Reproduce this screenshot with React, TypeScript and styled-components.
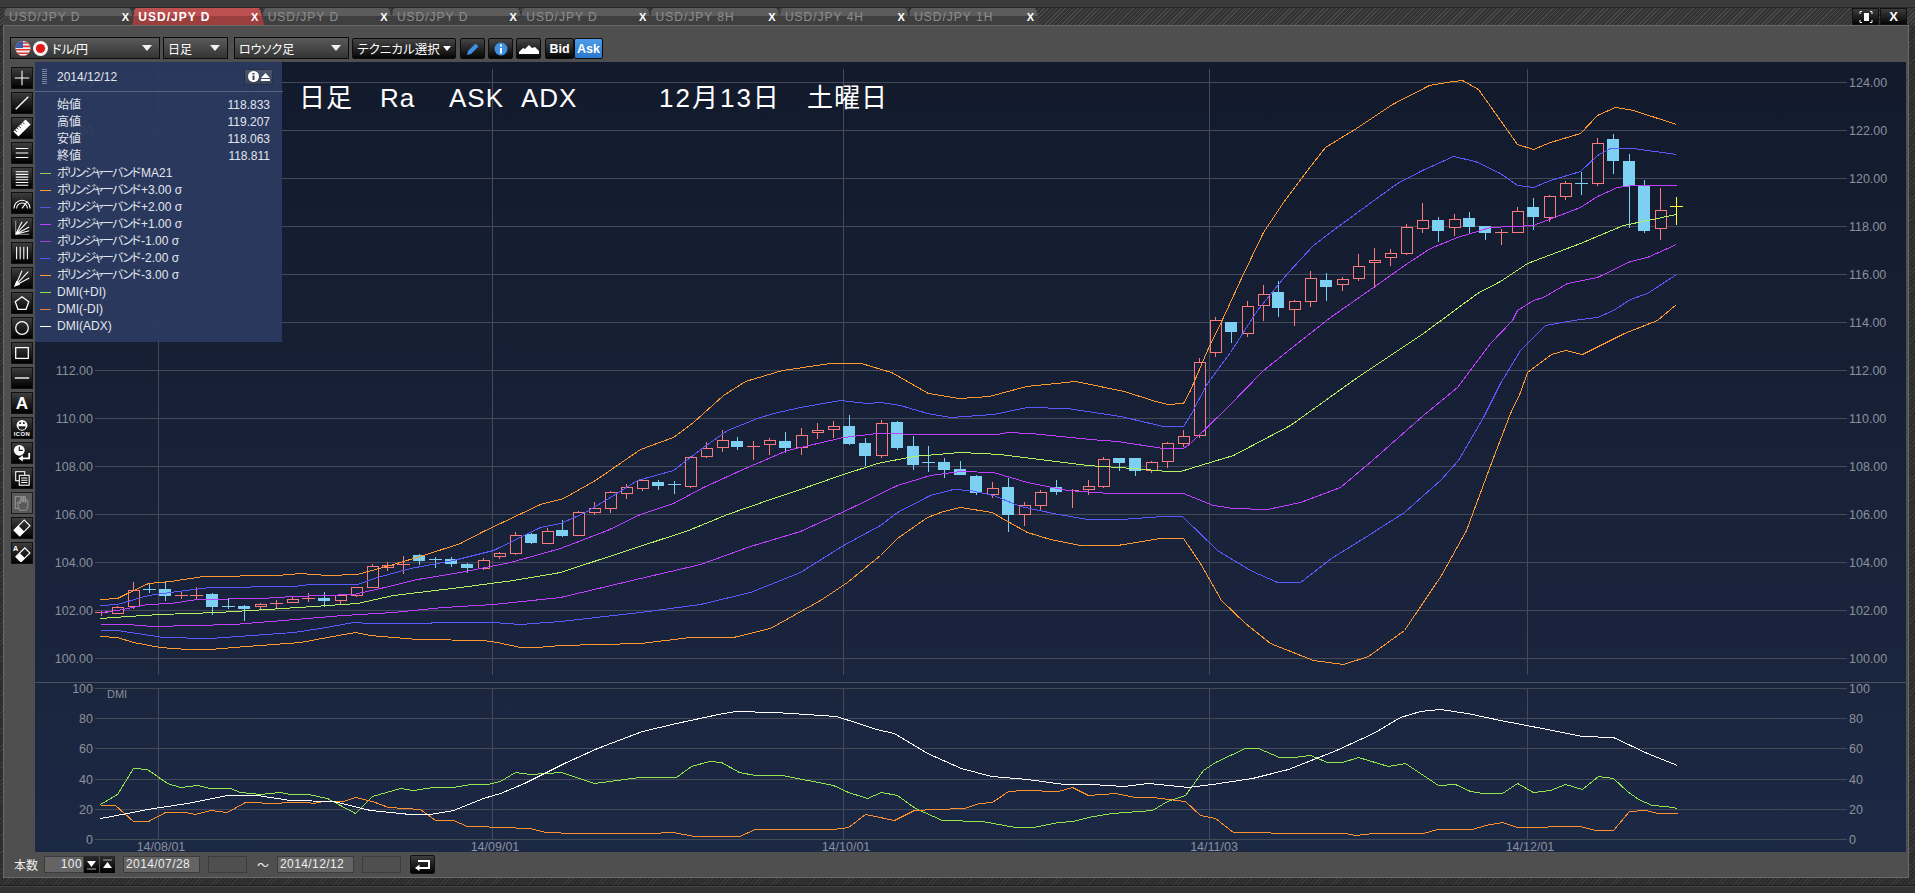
import { FC, ReactNode } from "react";
import styled, { createGlobalStyle } from "styled-components";

const FONT = `"Liberation Sans", "Noto Sans CJK JP", sans-serif`;

const GlobalStyle = createGlobalStyle`
  html, body { margin: 0; padding: 0; background: #2e2e2e; }
  body { font-family: ${FONT}; font-feature-settings: "palt"; }
`;

type CandleKind = "r" | "b" | "y";
type Row = [CandleKind, number, number, number, number];
type Pt = [number, number];

// 3x crop readings: [kind, high, body top, body bottom, low] relative to y0
const seg = (y0: number, rows: Row[]) =>
  rows.map(([k, h, t, b, l]) => ({
    k,
    hi: y0 + h / 3,
    top: y0 + t / 3,
    bot: y0 + b / 3,
    lo: y0 + l / 3,
  }));

const candles = [
  ...seg(530, [
    ["r", 243, 247, 247, 257],
    ["r", 227, 230, 247, 251],
    ["r", 157, 181, 230, 237],
    ["b", 160, 178, 178, 190],
    ["b", 155, 178, 197, 213],
    ["r", 183, 196, 196, 208],
    ["r", 172, 196, 196, 208],
    ["b", 188, 192, 230, 254],
    ["b", 205, 229, 229, 236],
    ["b", 225, 228, 237, 273],
    ["r", 220, 223, 230, 236],
    ["r", 210, 218, 218, 233],
    ["r", 199, 208, 217, 219],
    ["r", 189, 203, 203, 215],
    ["b", 186, 204, 213, 230],
    ["r", 193, 196, 212, 222],
    ["r", 170, 172, 196, 200],
    ["r", 103, 109, 173, 175],
    ["r", 97, 106, 113, 123],
    ["r", 78, 103, 103, 131],
    ["b", 72, 75, 93, 104],
    ["b", 82, 87, 87, 113],
    ["b", 82, 87, 102, 110],
    ["b", 100, 102, 114, 128],
    ["r", 85, 89, 113, 120],
    ["r", 66, 70, 80, 87],
    ["r", 7, 16, 71, 74],
    ["b", 9, 12, 39, 42],
    ["r", -6, 4, 39, 42],
  ]),
  ...seg(390, [
    ["b", 390, 420, 438, 441],
    ["r", 363, 367, 435, 438],
    ["r", 336, 355, 368, 375],
    ["r", 303, 307, 356, 369],
    ["r", 282, 292, 311, 327],
    ["r", 268, 271, 296, 302],
    ["b", 270, 276, 288, 300],
    ["b", 273, 283, 283, 312],
    ["r", 198, 202, 290, 293],
    ["r", 156, 175, 200, 204],
    ["r", 120, 151, 173, 186],
    ["b", 141, 153, 171, 180],
    ["r", 153, 167, 167, 210],
    ["r", 144, 151, 164, 195],
    ["b", 126, 153, 174, 190],
    ["r", 114, 136, 173, 195],
    ["r", 99, 121, 128, 147],
  ]),
  ...seg(400, [
    ["r", 63, 79, 89, 114],
    ["b", 45, 78, 132, 135],
    ["b", 114, 129, 168, 198],
    ["r", 60, 70, 167, 173],
    ["b", 63, 66, 144, 150],
    ["b", 108, 138, 195, 210],
    ["b", 138, 187, 187, 216],
    ["b", 174, 186, 210, 234],
    ["b", 183, 207, 225, 225],
    ["b", 225, 228, 278, 285],
    ["r", 246, 265, 284, 294],
    ["b", 234, 261, 345, 396],
    ["r", 306, 316, 344, 378],
    ["r", 270, 277, 317, 330],
    ["b", 240, 261, 276, 285],
    ["r", 267, 269, 269, 324],
    ["r", 240, 259, 269, 285],
    ["r", 171, 178, 260, 263],
    ["b", 174, 174, 189, 213],
    ["b", 174, 174, 213, 228],
    ["r", 183, 187, 212, 219],
    ["r", 126, 130, 185, 204],
    ["r", 90, 109, 131, 140],
  ]),
  ...seg(170, [
    ["r", 564, 577, 797, 803],
    ["r", 441, 451, 548, 560],
    ["b", 456, 456, 486, 519],
    ["r", 393, 409, 491, 501],
    ["r", 345, 373, 407, 453],
    ["b", 333, 366, 414, 441],
    ["r", 390, 394, 418, 468],
    ["r", 303, 325, 395, 411],
    ["b", 309, 330, 351, 393],
    ["r", 321, 328, 344, 363],
    ["r", 252, 289, 326, 333],
    ["r", 234, 271, 278, 354],
    ["r", 237, 250, 263, 288],
    ["r", 162, 172, 251, 255],
    ["r", 99, 151, 176, 189],
    ["b", 141, 150, 183, 216],
    ["r", 132, 148, 173, 198],
    ["b", 126, 144, 171, 192],
    ["b", 168, 168, 189, 210],
    ["r", 177, 187, 187, 225],
    ["r", 111, 124, 188, 190],
  ]),
  ...seg(100, [
    ["b", 294, 321, 351, 390],
    ["r", 285, 289, 353, 366],
    ["r", 243, 250, 290, 300],
    ["b", 216, 250, 250, 285],
    ["r", 114, 130, 251, 258],
    ["b", 102, 117, 183, 222],
    ["b", 162, 183, 258, 384],
    ["b", 240, 258, 393, 399],
    ["r", 264, 331, 385, 420],
    ["y", 291, 319, 319, 375],
  ]),
];

const bands: { color: string; pts: Pt[] }[] = [
  {
    color: "#ff9a33",
    pts: [
      [100, 599], [117, 598], [127, 593], [148, 583], [170, 581], [203, 576], [277, 575], [300, 573], [327, 575], [357, 574],
      [393, 564], [423, 555], [460, 543], [483, 531], [540, 504], [563, 498], [595, 480], [640, 449], [673, 437], [693, 422],
      [723, 395], [745, 381], [782, 370], [830, 363], [861, 363], [891, 372], [928, 393], [959, 398], [989, 396], [1026, 386],
      [1075, 381], [1124, 391], [1152, 400], [1167, 404], [1183, 403], [1190, 390], [1207, 350], [1223, 317], [1240, 280],
      [1263, 232], [1283, 202], [1307, 170], [1325, 147], [1356, 128], [1392, 104], [1429, 85], [1453, 81], [1462, 80],
      [1478, 89], [1500, 120], [1517, 144], [1533, 149], [1550, 142], [1580, 133], [1597, 115], [1615, 107], [1633, 110], [1676, 124],
    ],
  },
  {
    color: "#5a5aff",
    pts: [
      [100, 605], [117, 604], [148, 595], [170, 592], [210, 587], [293, 586], [310, 584], [357, 584], [377, 577], [410, 568],
      [453, 560], [493, 550], [540, 527], [560, 523], [583, 513], [610, 497], [637, 480], [673, 470], [703, 447], [727, 430],
      [757, 418], [773, 413], [800, 407], [840, 400], [867, 403], [880, 402], [900, 405], [927, 413], [950, 417], [993, 414],
      [1027, 407], [1067, 408], [1120, 416], [1163, 426], [1183, 426], [1190, 415], [1207, 383], [1230, 352], [1257, 310],
      [1287, 273], [1313, 245], [1330, 232], [1357, 212], [1397, 183], [1422, 170], [1453, 156], [1475, 161], [1500, 173],
      [1517, 185], [1533, 187], [1550, 180], [1580, 171], [1597, 155], [1610, 148], [1633, 148], [1676, 154],
    ],
  },
  {
    color: "#c040ff",
    pts: [
      [100, 612], [117, 610], [147, 604], [170, 603], [197, 599], [260, 598], [293, 596], [353, 594], [380, 588], [417, 579],
      [460, 572], [510, 562], [560, 548], [607, 530], [640, 514], [673, 503], [703, 487], [747, 467], [787, 450], [800, 447],
      [843, 437], [877, 433], [927, 434], [997, 434], [1007, 432], [1030, 433], [1090, 439], [1117, 441], [1163, 448], [1183, 448],
      [1190, 443], [1227, 407], [1263, 370], [1297, 343], [1330, 317], [1373, 287], [1407, 263], [1430, 248], [1457, 237],
      [1490, 227], [1533, 225], [1580, 207], [1597, 196], [1617, 187], [1633, 185], [1676, 185],
    ],
  },
  {
    color: "#b4f060",
    pts: [
      [100, 618], [127, 616], [160, 614], [217, 612], [267, 609], [313, 606], [357, 603], [393, 595], [460, 587], [513, 580],
      [560, 572], [688, 530], [727, 514], [773, 498], [800, 489], [837, 476], [877, 463], [913, 456], [960, 452], [1000, 454],
      [1047, 460], [1087, 465], [1133, 468], [1167, 471], [1180, 471], [1233, 455], [1290, 425], [1357, 377], [1423, 333],
      [1477, 293], [1500, 281], [1527, 263], [1580, 243], [1623, 225], [1676, 214],
    ],
  },
  {
    color: "#c040ff",
    pts: [
      [100, 624], [127, 624], [153, 626], [233, 624], [307, 618], [343, 615], [393, 612], [443, 607], [493, 604], [560, 597],
      [640, 578], [700, 564], [750, 546], [800, 531], [850, 508], [897, 485], [930, 475], [960, 471], [993, 472], [1027, 482],
      [1067, 490], [1110, 493], [1183, 493], [1213, 505], [1233, 508], [1267, 509], [1300, 502], [1340, 487], [1372, 460],
      [1423, 415], [1457, 387], [1490, 343], [1512, 320], [1517, 310], [1533, 300], [1543, 297], [1567, 283], [1597, 277],
      [1630, 261], [1647, 257], [1676, 244],
    ],
  },
  {
    color: "#5a5aff",
    pts: [
      [100, 630], [117, 630], [150, 635], [163, 637], [210, 638], [293, 632], [320, 628], [353, 622], [370, 623], [493, 622],
      [520, 624], [560, 621], [640, 612], [700, 604], [750, 592], [800, 572], [843, 545], [880, 525], [897, 512], [930, 495],
      [953, 489], [970, 490], [993, 495], [1020, 506], [1053, 513], [1087, 519], [1120, 519], [1163, 516], [1182, 516],
      [1217, 550], [1250, 570], [1277, 582], [1300, 582], [1331, 558], [1368, 535], [1404, 512], [1440, 480], [1458, 460],
      [1483, 417], [1500, 383], [1520, 350], [1545, 325], [1573, 320], [1597, 317], [1613, 310], [1630, 299], [1647, 293], [1676, 274],
    ],
  },
  {
    color: "#ff9a33",
    pts: [
      [100, 636], [117, 637], [133, 642], [160, 647], [187, 649], [210, 649], [233, 647], [300, 642], [327, 637], [355, 632],
      [370, 635], [417, 639], [483, 640], [497, 642], [520, 647], [537, 647], [560, 645], [640, 643], [690, 637], [733, 637],
      [770, 628], [820, 600], [847, 582], [880, 555], [897, 538], [927, 517], [943, 511], [960, 507], [992, 512], [1000, 517],
      [1027, 532], [1050, 539], [1080, 545], [1117, 545], [1160, 538], [1183, 538], [1200, 563], [1221, 600], [1245, 623],
      [1270, 643], [1313, 660], [1343, 664], [1368, 656], [1404, 630], [1441, 575], [1466, 530], [1492, 460], [1510, 413],
      [1520, 392], [1527, 372], [1551, 354], [1565, 350], [1582, 354], [1600, 345], [1624, 333], [1657, 320], [1676, 304],
    ],
  },
];

const dmiPlus: Pt[] = [
  [100, 804], [117, 794], [133, 768], [147, 769], [167, 783], [180, 787], [197, 785], [210, 788], [230, 788], [240, 792],
  [260, 794], [280, 792], [290, 794], [308, 794], [327, 798], [355, 813], [372, 796], [400, 788], [413, 790], [433, 787],
  [453, 787], [470, 784], [487, 784], [500, 781], [515, 772], [530, 774], [561, 772], [594, 783], [639, 777], [676, 777],
  [691, 766], [709, 761], [721, 762], [739, 772], [755, 775], [782, 775], [833, 785], [848, 792], [867, 798], [881, 792],
  [897, 795], [915, 808], [942, 820], [982, 821], [1015, 827], [1033, 827], [1058, 822], [1073, 821], [1088, 817], [1112, 813],
  [1152, 810], [1167, 801], [1185, 795], [1203, 770], [1215, 762], [1245, 748], [1258, 748], [1279, 757], [1294, 757],
  [1310, 755], [1327, 762], [1342, 762], [1358, 757], [1388, 766], [1405, 763], [1420, 773], [1438, 785], [1455, 784],
  [1470, 791], [1483, 793], [1502, 793], [1517, 783], [1533, 792], [1550, 790], [1565, 784], [1582, 789], [1598, 776],
  [1613, 778], [1627, 791], [1638, 799], [1652, 805], [1665, 806], [1677, 808],
];

const dmiMinus: Pt[] = [
  [100, 805], [115, 805], [133, 821], [148, 821], [165, 812], [185, 812], [195, 814], [210, 810], [227, 812], [245, 802],
  [277, 803], [287, 802], [307, 802], [313, 803], [323, 801], [343, 801], [355, 797], [372, 801], [388, 807], [420, 809],
  [435, 820], [453, 820], [467, 826], [487, 826], [490, 827], [500, 827], [530, 828], [545, 832], [576, 833], [600, 833],
  [648, 833], [673, 832], [694, 836], [739, 836], [755, 829], [833, 829], [848, 827], [865, 814], [894, 820], [914, 810],
  [936, 809], [964, 808], [979, 803], [992, 802], [1008, 791], [1024, 790], [1058, 791], [1072, 787], [1088, 795], [1115, 793],
  [1135, 797], [1152, 797], [1185, 801], [1200, 815], [1215, 818], [1233, 832], [1255, 832], [1285, 833], [1345, 833],
  [1355, 835], [1373, 833], [1423, 833], [1437, 829], [1472, 829], [1485, 825], [1502, 822], [1517, 827], [1580, 826],
  [1595, 830], [1613, 830], [1629, 811], [1645, 810], [1658, 813], [1677, 813],
];

const dmiAdx: Pt[] = [
  [100, 818], [127, 813], [147, 809], [187, 803], [227, 795], [257, 795], [290, 800], [333, 801], [370, 810], [410, 814],
  [430, 814], [453, 810], [483, 798], [500, 793], [524, 783], [564, 763], [597, 748], [642, 731], [676, 723], [718, 714],
  [736, 711], [773, 712], [791, 713], [836, 716], [858, 723], [876, 729], [894, 733], [927, 753], [961, 768], [991, 776],
  [1027, 779], [1064, 784], [1091, 784], [1124, 786], [1148, 783], [1188, 787], [1212, 784], [1252, 778], [1288, 769],
  [1336, 750], [1373, 733], [1400, 717], [1420, 711], [1440, 709], [1467, 713], [1500, 720], [1547, 729], [1582, 736],
  [1613, 737], [1647, 753], [1677, 765],
];

const priceLabels = [124, 122, 120, 118, 116, 114, 112, 110, 108, 106, 104, 102, 100];
const dmiLabels = [100, 80, 60, 40, 20, 0];
const verticals = [158, 492, 843, 1209, 1527];
const dates: [number, string][] = [
  [161, "14/08/01"],
  [495, "14/09/01"],
  [846, "14/10/01"],
  [1214, "14/11/03"],
  [1530, "14/12/01"],
];

const tabs = ["USD/JPY D", "USD/JPY D", "USD/JPY D", "USD/JPY D", "USD/JPY D", "USD/JPY 8H", "USD/JPY 4H", "USD/JPY 1H"];

const BOLLINGER = "ボリンジャーバンド";

const legend: [string, string, boolean][] = [
  ["#8fd14f", "MA21", true],
  ["#ff9933", "+3.00 σ", true],
  ["#5555dd", "+2.00 σ", true],
  ["#c040ff", "+1.00 σ", true],
  ["#a040e0", "-1.00 σ", true],
  ["#5050ff", "-2.00 σ", true],
  ["#ff9a44", "-3.00 σ", true],
  ["#90e050", "DMI(+DI)", false],
  ["#e08040", "DMI(-DI)", false],
  ["#ffffff", "DMI(ADX)", false],
];

const Page = styled.div`
  width: 1915px;
  height: 893px;
  overflow: hidden;
  display: flex;
  flex-direction: column;
  background: repeating-linear-gradient(135deg, #3a3a3a 0 1px, #2b2b2b 1px 3px);
`;

const TopEdge = styled.div`
  height: 7px;
  flex: none;
  background: #3b3b3b;
  border-bottom: 1px solid #262626;
`;

const TabStrip = styled.div`
  height: 17px;
  flex: none;
  display: flex;
  padding-left: 3px;
  background: repeating-linear-gradient(135deg, #4a4a4a 0 1px, #333 1px 3px);
`;

const Tab = styled.div<{ $active?: boolean }>`
  flex: none;
  width: 132px;
  margin-right: -2.7px;
  height: 17px;
  box-sizing: border-box;
  padding: 0 6px 0 6px;
  display: flex;
  align-items: center;
  justify-content: space-between;
  clip-path: polygon(0 100%, 2px 2px, 4px 0, calc(100% - 6px) 0, calc(100% - 4px) 2px, 100% 100%);
  background: ${(p) =>
    p.$active
      ? "linear-gradient(#bd5050 0 50%, #9b3e3e 50%)"
      : "linear-gradient(#5c5c5c 0 50%, #3f3f3f 50%)"};
  color: ${(p) => (p.$active ? "#ffffff" : "#8d8d8d")};
  font-size: 12px;
  font-weight: ${(p) => (p.$active ? 700 : 400)};
  letter-spacing: 1px;
  position: relative;
  z-index: ${(p) => (p.$active ? 2 : 1)};
`;

const TabClose = styled.span`
  color: #fff;
  font-size: 11px;
  font-weight: 700;
  letter-spacing: 0;
`;

const WindowButtons = styled.div`
  margin-left: auto;
  margin-right: 8px;
  display: flex;
  gap: 1px;
`;

const WindowButton = styled.div`
  width: 27px;
  height: 17px;
  box-sizing: border-box;
  background: linear-gradient(#3c3c3c, #050505);
  border: 1px solid #111;
  color: #fff;
  font-size: 13px;
  font-weight: 700;
  display: flex;
  align-items: center;
  justify-content: center;
`;

const Frame = styled.div`
  margin-left: 3px;
  width: 1906px;
  height: 853px;
  flex: none;
  box-sizing: border-box;
  border: 1px solid #696969;
  background: #4f4f4f;
  display: flex;
  flex-direction: column;
`;

const Toolbar = styled.div`
  height: 36px;
  flex: none;
  display: flex;
  align-items: flex-start;
  padding: 11px 0 0 6px;
  box-sizing: border-box;
  gap: 3px;
`;

const Select = styled.div<{ $w: number; $ml?: number }>`
  width: ${(p) => p.$w}px;
  margin-left: ${(p) => p.$ml ?? 0}px;
  height: 22px;
  box-sizing: border-box;
  flex: none;
  display: flex;
  align-items: center;
  gap: 3px;
  padding: 0 7px 0 4px;
  border: 1px solid #0c0c0c;
  background: linear-gradient(#5a5a5a, #343434);
  color: #fff;
  font-size: 12px;
`;

const Caret = styled.span`
  margin-left: auto;
  width: 0;
  height: 0;
  border-left: 5px solid transparent;
  border-right: 5px solid transparent;
  border-top: 6px solid #f0f0f0;
`;

const ToolButton = styled.div<{ $w: number; $blue?: boolean; $ml?: number }>`
  width: ${(p) => p.$w}px;
  height: 21px;
  margin-top: 1px;
  margin-left: ${(p) => p.$ml ?? 0}px;
  box-sizing: border-box;
  flex: none;
  display: flex;
  align-items: center;
  justify-content: center;
  gap: 3px;
  border: 1px solid #0c0c0c;
  border-radius: 2px;
  background: ${(p) => (p.$blue ? "linear-gradient(#4d9be8, #2b78cf)" : "linear-gradient(#454545, #060606)")};
  color: #fff;
  font-size: 12.5px;
  font-weight: 400;
`;

const BidAsk = styled.div`
  display: flex;
  margin-left: 1px;
`;

const BidAskLabel = styled.span`
  font-weight: 700;
`;

const Body = styled.div`
  height: 790px;
  flex: none;
  display: flex;
`;

const Rail = styled.div`
  width: 31px;
  flex: none;
  box-sizing: border-box;
  padding: 5px 0 0 7px;
  display: flex;
  flex-direction: column;
  gap: 3px;
`;

const RailButton = styled.div<{ $off?: boolean }>`
  width: 22px;
  height: 22px;
  box-sizing: border-box;
  border: 1px solid #111;
  background: ${(p) => (p.$off ? "#5c5c5c" : "linear-gradient(#3d3d3d, #000)")};
  opacity: ${(p) => (p.$off ? 0.8 : 1)};
  display: flex;
  align-items: center;
  justify-content: center;
`;

const ChartArea = styled.div`
  position: relative;
  width: 1871px;
  height: 790px;
  flex: none;
  background: linear-gradient(#121a2c 0, #1a253e 80%, #1c2945 100%);
`;

const ChartSvg = styled.svg`
  display: block;
  overflow: visible;
`;

const AxisText = styled.text`
  font-family: ${FONT};
  font-size: 12.5px;
  fill: #8b909b;
`;

const Title = styled.div`
  position: absolute;
  left: 264px;
  top: 21px;
  color: #fff;
  font-size: 26px;
  line-height: 30px;
  letter-spacing: 1px;
  white-space: pre;
`;

const TitlePart = styled.span<{ $x: number; $wide?: boolean }>`
  position: absolute;
  left: ${(p) => p.$x}px;
  letter-spacing: ${(p) => (p.$wide ? 2 : 1)}px;
`;

const InfoPanel = styled.div`
  position: absolute;
  left: 0;
  top: 0;
  width: 247px;
  height: 280px;
  background: rgba(43, 58, 96, 0.93);
  color: #e2e6ee;
  font-size: 12px;
`;

const PanelHead = styled.div`
  height: 30px;
  box-sizing: border-box;
  border-bottom: 1px solid #5a6580;
  width: 248px;
  display: flex;
  align-items: center;
  padding: 0 10px 0 7px;
`;

const Grip = styled.div`
  width: 5px;
  height: 15px;
  margin-right: 10px;
  background: repeating-linear-gradient(#7c879f 0 1px, transparent 1px 2px);
`;

const PanelButton = styled.div`
  margin-left: auto;
  width: 29px;
  height: 16px;
  border-radius: 2px;
  background: linear-gradient(#4d5870, #36415a);
  border: 1px solid #262f44;
  box-sizing: border-box;
  display: flex;
  align-items: center;
  justify-content: center;
  gap: 2px;
`;

const PanelRows = styled.div`
  padding-top: 5px;
`;

const PanelRow = styled.div`
  height: 17px;
  line-height: 17px;
  display: flex;
  align-items: center;
  padding: 0 12px 0 22px;
  position: relative;
  white-space: pre;
`;

const Kana = styled.span`
  letter-spacing: -1.6px;
  margin-right: 1.6px;
`;

const PanelValue = styled.span`
  margin-left: auto;
`;

const Swatch = styled.i<{ $c: string }>`
  position: absolute;
  left: 5px;
  top: 8px;
  width: 11px;
  height: 1px;
  background: ${(p) => p.$c};
`;

const BottomBar = styled.div`
  height: 25px;
  flex: none;
  display: flex;
  align-items: center;
  padding-left: 10px;
  color: #eee;
  font-size: 12px;
`;

const BarLabel = styled.span<{ $mr: number }>`
  margin-right: ${(p) => p.$mr}px;
`;

const Field = styled.div<{ $w: number; $mr: number; $empty?: boolean }>`
  width: ${(p) => p.$w}px;
  margin-right: ${(p) => p.$mr}px;
  height: 17px;
  box-sizing: border-box;
  flex: none;
  border: 1px solid #3c3c3c;
  background: ${(p) => (p.$empty ? "#4f4f4f" : "#646464")};
  color: #eee;
  font-size: 12px;
  line-height: 15px;
  padding: 0 1px 0 2px;
  letter-spacing: 0.4px;
  text-align: ${(p) => (p.$w < 50 ? "right" : "left")};
`;

const Stepper = styled.div<{ $mr: number }>`
  width: 15px;
  height: 17px;
  margin-right: ${(p) => p.$mr}px;
  box-sizing: border-box;
  flex: none;
  background: linear-gradient(#2c2c2c, #000);
  display: flex;
  align-items: center;
  justify-content: center;
`;

const ReturnButton = styled.div`
  width: 25px;
  height: 19px;
  box-sizing: border-box;
  border: 1px solid #111;
  border-radius: 2px;
  background: linear-gradient(#3d3d3d, #000);
  display: flex;
  align-items: center;
  justify-content: center;
`;

const BottomEdge = styled.div`
  height: 7px;
  flex: none;
  margin-top: 7px;
  background: #333;
  border-top: 1px solid #1f1f1f;
  box-shadow: inset 0 1px 0 #444;
`;

const S = { stroke: "#fff", strokeWidth: 1.2, fill: "none" };

const railIcons: ReactNode[] = [
  <path {...S} d="M10 2V18M2 10H18" />,
  <path {...S} strokeWidth={1.5} d="M3 17L17 3" />,
  <g transform="rotate(-45 10 10)">
    <rect x="0.5" y="6" width="19" height="8" fill="#fff" />
    <path stroke="#222" d="M3 6v3M6 6v2M9 6v3M12 6v2M15 6v3" />
  </g>,
  <path {...S} d="M3 5H17M3 10H17M3 15H17" />,
  <path {...S} d="M3 3H17M3 6H17M3 9H17M3 12H17M3 15H17M3 18H17" />,
  <g {...S}>
    <path d="M1 16A9 9 0 0 1 19 16" />
    <path d="M4 16A6 6 0 0 1 16 16" />
    <path d="M10 16L16 8" />
  </g>,
  <g {...S}>
    <path stroke="#999" d="M3 2V17H18" />
    <path d="M3 17L16 3M3 17L18 9M3 17L10 3M3 17L18 13" />
  </g>,
  <path {...S} d="M4 3V17M8 3V17M12 3V17M16 3V17" />,
  <g {...S}>
    <path d="M3 18L17 3M3 18L18 10M3 18L10 2" />
    <path fill="#fff" d="M2 19L7 17L4 14Z" />
  </g>,
  <path {...S} strokeWidth={1.4} d="M10 3L17.5 8.5L14.5 17H5.5L2.5 8.5Z" />,
  <circle {...S} strokeWidth={1.4} cx="10" cy="10" r="7" />,
  <rect {...S} strokeWidth={1.4} x="3" y="4" width="14" height="12" />,
  <path stroke="#fff" strokeWidth="1.5" d="M2 10H18" />,
  <text x="10" y="17" textAnchor="middle" fill="#fff" fontFamily="Liberation Sans" fontWeight="700" fontSize="19">
    A
  </text>,
  <g>
    <circle cx="10" cy="7" r="6" fill="#fff" />
    <path d="M6 8A4 4 0 0 0 14 8Z M7 3.5h2v2H7z M11 3.5h2v2h-2z" fill="#222" />
    <text x="10" y="19" textAnchor="middle" fill="#fff" fontFamily="Liberation Sans" fontWeight="700" fontSize="6.5" letterSpacing="0.5">
      ICON
    </text>
  </g>,
  <g>
    <circle cx="7" cy="7" r="6" fill="#fff" />
    <path stroke="#222" strokeWidth="1.3" fill="none" d="M7 3V7H11" />
    <path stroke="#fff" strokeWidth="2" fill="none" d="M18 10V16H10" />
    <path fill="#fff" d="M6 16L11 12.5V19.5Z" />
  </g>,
  <g stroke="#fff" fill="#111" strokeWidth="1.2">
    <rect x="3" y="3" width="10" height="10" />
    <rect x="7" y="7" width="11" height="11" />
    <path d="M9 10H16M9 12.5H16M9 15H16" />
  </g>,
  <g stroke="#aaa" fill="none" strokeWidth="1.1">
    <rect x="2.5" y="3" width="11" height="13" />
    <path fill="#5c5c5c" d="M7 18L5 10Q5 8 7 9L8 11V5Q9 3.5 10 5V9V4Q11 3 12 4V9V5Q13 4 14 5V10V7Q15 6 16.5 7V13Q16 18 14 18Z" />
  </g>,
  <g transform="rotate(-45 10 10)">
    <rect x="2" y="5.5" width="16" height="9" stroke="#fff" strokeWidth="1.3" fill="none" />
    <rect x="2" y="5.5" width="7" height="9" fill="#fff" />
  </g>,
  <g>
    <text x="0" y="7.5" fill="#fff" fontFamily="Liberation Sans" fontWeight="700" fontSize="8">
      A
    </text>
    <g transform="rotate(-45 11 12)">
      <rect x="4" y="8" width="14" height="8" stroke="#fff" strokeWidth="1.3" fill="none" />
      <rect x="4" y="8" width="6" height="8" fill="#fff" />
    </g>
  </g>,
];

const RailIcon: FC<{ children: ReactNode }> = ({ children }) => (
  <svg width="18" height="18" viewBox="0 0 20 20">
    {children}
  </svg>
);

const Flags = () => (
  <svg width="34" height="17" viewBox="0 0 34 17">
    <defs>
      <clipPath id="usFlag">
        <circle cx="8" cy="8.5" r="7.5" />
      </clipPath>
    </defs>
    <g clipPath="url(#usFlag)">
      <rect width="16" height="17" fill="#eee" />
      <path stroke="#d33" strokeWidth="1.6" d="M0 3H16M0 6.4H16M0 9.8H16M0 13.2H16M0 16.2H16" />
      <rect width="8" height="8" fill="#3b5cab" />
    </g>
    <circle cx="25.5" cy="8.5" r="7.5" fill="#f4f4f4" />
    <circle cx="25.5" cy="8.5" r="4.6" fill="#e01818" />
  </svg>
);

const Tri: FC<{ up?: boolean }> = ({ up }) => (
  <svg width="11" height="11" viewBox="0 0 11 11">
    <path fill="#fff" d={up ? "M5.5 3L10 9H1Z" : "M1 2H10L5.5 8Z"} />
    <path stroke="#aaa" d={up ? "M1 1H10" : "M1 10H10"} />
  </svg>
);

// half pixel offset: crispEdges drops exactly flat segments on whole y values
const poly = (pts: Pt[]) => pts.map(([x, y]) => `${x + 0.5},${y + 0.5}`).join(" ");

const candleX = (i: number) => Math.round(101 + 15.912 * i) + 0.5;
const candleColor = { r: "#fb7b7b", b: "#7dd0f2", y: "#ffff33" };

const Candles = () => (
  <g shapeRendering="crispEdges">
    {candles.map((c, i) => {
      const x = candleX(i);
      const color = candleColor[c.k];
      const flat = Math.abs(c.bot - c.top) < 0.5;
      return (
        <g key={i}>
          <path stroke={color} d={`M${x} ${c.hi}V${c.lo}`} />
          {flat && <path stroke={color} d={`M${x - 6.5} ${Math.round(c.top) + 0.5}H${x + 6.5}`} />}
          {!flat && c.k === "b" && <rect x={x - 6.5} y={c.top} width={12} height={c.bot - c.top} fill={color} />}
          {!flat && c.k === "r" && (
            <rect
              x={x - 5.5}
              y={Math.round(c.top) + 0.5}
              width={11}
              height={Math.max(1, Math.round(c.bot - c.top))}
              fill={c.top < 350 ? "#151d31" : "#18223a"}
              stroke={color}
            />
          )}
        </g>
      );
    })}
  </g>
);

const Chart = () => (
  <ChartSvg width="1871" height="790" viewBox="35 62 1871 790">
    <g stroke="#444a58" shapeRendering="crispEdges">
      {priceLabels.map((p, i) => (
        <path key={p} d={`M95 ${82.5 + i * 48}H1847`} />
      ))}
      {dmiLabels.map((p, i) => (
        <path key={p} d={`M95 ${688.5 + Math.round(i * 30.2)}H1847`} />
      ))}
      {verticals.map((x) => (
        <g key={x}>
          <path d={`M${x + 0.5} 69V675`} />
          <path d={`M${x + 0.5} 688V840`} />
        </g>
      ))}
      <path d="M35 682.5H1906" stroke="#4a5062" />
    </g>
    {priceLabels.map((p, i) => (
      <g key={p}>
        <AxisText x="93" y={87 + i * 48} textAnchor="end">
          {p.toFixed(2)}
        </AxisText>
        <AxisText x="1849" y={87 + i * 48}>
          {p.toFixed(2)}
        </AxisText>
      </g>
    ))}
    {dmiLabels.map((p, i) => (
      <g key={p}>
        <AxisText x="93" y={693 + i * 30.2} textAnchor="end">
          {p}
        </AxisText>
        <AxisText x="1849" y={693 + i * 30.2}>
          {p}
        </AxisText>
      </g>
    ))}
    {dates.map(([x, d]) => (
      <AxisText key={d} x={x} y={851} textAnchor="middle">
        {d}
      </AxisText>
    ))}
    <AxisText x="107" y="698" style={{ fontSize: 11 }}>
      DMI
    </AxisText>
    <Candles />
    <g fill="none" shapeRendering="crispEdges">
      {bands.map((b, i) => (
        <polyline key={i} points={poly(b.pts)} stroke={b.color} />
      ))}
      <polyline points={poly(dmiPlus)} stroke="#93e44f" />
      <polyline points={poly(dmiMinus)} stroke="#ff9030" />
      <polyline points={poly(dmiAdx)} stroke="#ffffff" />
    </g>
    <g shapeRendering="crispEdges" stroke="#ffff33">
      <path d={`M${candleX(99)} ${100 + 291 / 3}V${100 + 375 / 3}`} />
      <path d={`M${candleX(99) - 6.5} 206.5H${candleX(99) + 6.5}`} />
    </g>
  </ChartSvg>
);

const App = () => (
  <>
    <GlobalStyle />
    <Page>
      <TopEdge />
      <TabStrip>
        {tabs.map((t, i) => (
          <Tab key={i} $active={i === 1}>
            {t}
            <TabClose>X</TabClose>
          </Tab>
        ))}
        <WindowButtons>
          <WindowButton>
            <svg width="14" height="12" viewBox="0 0 14 12">
              <rect x="5" y="2" width="5" height="8" fill="#fff" />
              <path stroke="#fff" fill="none" d="M3 0.5H1V3M11 0.5H13V3M1 9V11.5H3M13 9V11.5H11" />
            </svg>
          </WindowButton>
          <WindowButton>X</WindowButton>
        </WindowButtons>
      </TabStrip>
      <Frame>
        <Toolbar>
          <Select $w={150}>
            <Flags />
            ドル/円
            <Caret />
          </Select>
          <Select $w={65}>
            日足
            <Caret />
          </Select>
          <Select $w={115} $ml={3}>
            ロウソク足
            <Caret />
          </Select>
          <ToolButton $w={104}>
            テクニカル選択
            <svg width="8" height="6" viewBox="0 0 8 6">
              <path fill="#fff" d="M0 0H8L4 5Z" />
            </svg>
          </ToolButton>
          <ToolButton $w={25} $ml={1}>
            <svg width="14" height="14" viewBox="0 0 14 14">
              <path fill="#3f8fe0" d="M1 13L2 9L9.5 1.5L12.5 4.5L5 12Z" />
            </svg>
          </ToolButton>
          <ToolButton $w={25}>
            <svg width="14" height="14" viewBox="0 0 14 14">
              <circle cx="7" cy="7" r="6.5" fill="#3f8fe0" />
              <path fill="#fff" d="M6 2.5h2v2H6zM6 6h2v5.5H6z" />
            </svg>
          </ToolButton>
          <ToolButton $w={25}>
            <svg width="20" height="10" viewBox="0 0 20 10">
              <path fill="#fff" d="M0 10V8L4 4L6 5L10 1L13 4L16 3L20 7V10Z" />
            </svg>
          </ToolButton>
          <BidAsk>
            <ToolButton $w={29}>
              <BidAskLabel>Bid</BidAskLabel>
            </ToolButton>
            <ToolButton $w={29} $blue>
              <BidAskLabel>Ask</BidAskLabel>
            </ToolButton>
          </BidAsk>
        </Toolbar>
        <Body>
          <Rail>
            {railIcons.map((icon, i) => (
              <RailButton key={i} $off={i === 17}>
                <RailIcon>{icon}</RailIcon>
              </RailButton>
            ))}
          </Rail>
          <ChartArea>
            <Chart />
            <Title>
              <TitlePart $x={0}>日足</TitlePart>
              <TitlePart $x={81}>Ra</TitlePart>
              <TitlePart $x={150}>ASK</TitlePart>
              <TitlePart $x={222}>ADX</TitlePart>
              <TitlePart $x={360} $wide>
                12月13日
              </TitlePart>
              <TitlePart $x={508}>土曜日</TitlePart>
            </Title>
            <InfoPanel>
              <PanelHead>
                <Grip />
                2014/12/12
                <PanelButton>
                  <svg width="11" height="11" viewBox="0 0 11 11">
                    <circle cx="5.5" cy="5.5" r="5.5" fill="#fff" />
                    <path fill="#36415a" d="M4.5 2h2v1.6h-2zM4.5 4.6h2v4.4h-2z" />
                  </svg>
                  <svg width="9" height="8" viewBox="0 0 9 8">
                    <path fill="#fff" d="M4.5 0L9 5H0ZM0 6H9V8H0Z" />
                  </svg>
                </PanelButton>
              </PanelHead>
              <PanelRows>
                <PanelRow>
                  始値<PanelValue>118.833</PanelValue>
                </PanelRow>
                <PanelRow>
                  高値<PanelValue>119.207</PanelValue>
                </PanelRow>
                <PanelRow>
                  安値<PanelValue>118.063</PanelValue>
                </PanelRow>
                <PanelRow>
                  終値<PanelValue>118.811</PanelValue>
                </PanelRow>
                {legend.map(([c, label, kana]) => (
                  <PanelRow key={label}>
                    <Swatch $c={c} />
                    {kana && <Kana>{BOLLINGER}</Kana>}
                    {label}
                  </PanelRow>
                ))}
              </PanelRows>
            </InfoPanel>
          </ChartArea>
        </Body>
        <BottomBar>
          <BarLabel $mr={6}>本数</BarLabel>
          <Field $w={40} $mr={0}>
            100
          </Field>
          <Stepper $mr={1}>
            <Tri />
          </Stepper>
          <Stepper $mr={8}>
            <Tri up />
          </Stepper>
          <Field $w={77} $mr={8}>
            2014/07/28
          </Field>
          <Field $w={39} $mr={10} $empty />
          <BarLabel $mr={8}>～</BarLabel>
          <Field $w={77} $mr={8}>
            2014/12/12
          </Field>
          <Field $w={39} $mr={9} $empty />
          <ReturnButton>
            <svg width="15" height="12" viewBox="0 0 15 12">
              <path fill="none" stroke="#fff" strokeWidth="2" d="M14 4V2H3M3 9H14V4" />
              <path fill="#fff" d="M0 9L4.5 5.5V12Z" />
            </svg>
          </ReturnButton>
        </BottomBar>
      </Frame>
      <BottomEdge />
    </Page>
  </>
);

export default App;
